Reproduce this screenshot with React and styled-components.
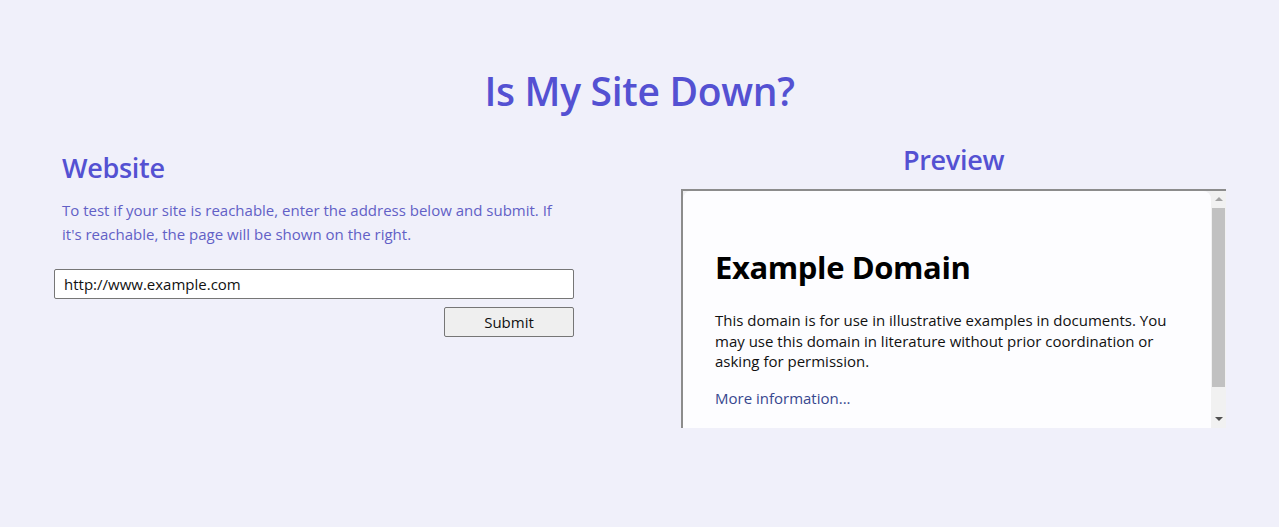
import React, { useState } from 'react';
import styled, { createGlobalStyle } from 'styled-components';

const GlobalStyle = createGlobalStyle`
  html, body {
    margin: 0;
    padding: 0;
    background-color: #f0f0fa;
  }
  body {
    font-family: "Open Sans", "Noto Sans", sans-serif;
  }
`;

const Page = styled.div`
  min-height: 527px;
  padding-top: 64px;
  box-sizing: border-box;
`;

const Title = styled.h1`
  margin: 0 0 25px;
  text-align: center;
  font-size: 39px;
  font-weight: 600;
  color: #5451d2;
  letter-spacing: -0.3px;
`;

const Columns = styled.div`
  display: grid;
  grid-template-columns: 520px 545px;
  column-gap: 107px;
  padding-left: 54px;
`;

const LeftColumn = styled.section`
  display: flex;
  flex-direction: column;
  padding-top: 8px;
`;

const RightColumn = styled.section`
  display: flex;
  flex-direction: column;
  align-items: center;
`;

const Heading = styled.h2`
  margin: 0;
  padding-left: ${(props) => (props.indent ? '8px' : '0')};
  font-size: 27px;
  font-weight: 600;
  color: #5451d2;
  letter-spacing: -0.3px;
  line-height: 36px;
`;

const Intro = styled.p`
  margin: 12px 0 23px;
  padding-left: 8px;
  font-size: 15px;
  line-height: 24px;
  color: #6260c6;
`;

const UrlInput = styled.input`
  box-sizing: border-box;
  width: 520px;
  height: 30px;
  padding: 0 9px;
  border: 1px solid #767676;
  border-radius: 2px;
  background: #fff;
  font-family: "Open Sans", sans-serif;
  font-size: 15px;
  color: #111;
  outline: none;
`;

const SubmitButton = styled.button`
  align-self: flex-end;
  margin-top: 8px;
  width: 130px;
  height: 30px;
  border: 1px solid #767676;
  border-radius: 2px;
  background: #efefef;
  font-family: "Open Sans", sans-serif;
  font-size: 15px;
  color: #111;
`;

const Frame = styled.div`
  margin-top: 11px;
  box-sizing: border-box;
  width: 545px;
  height: 239px;
  display: flex;
  border-top: 2px solid #8c8c8c;
  border-left: 2px solid #8c8c8c;
  background: #f0f0f2;
  overflow: hidden;
`;

const FrameBody = styled.div`
  flex: 1;
  overflow: hidden;
`;

const Card = styled.div`
  padding: 32px 32px 30px;
  background: #fdfdff;
  border-radius: 8px;
  font-family: "Open Sans", sans-serif;
`;

const CardTitle = styled.h3`
  margin: 25px 0 24px;
  font-size: 31px;
  font-weight: 700;
  color: #000;
  letter-spacing: -0.4px;
  line-height: 38px;
`;

const CardText = styled.p`
  margin: 0 0 16px;
  font-size: 15px;
  line-height: 20.5px;
  color: #111;
`;

const CardLink = styled.a`
  color: #38488f;
  text-decoration: none;
`;

const Scrollbar = styled.div`
  width: 15px;
  display: flex;
  flex-direction: column;
  align-items: center;
  background: #f1f1f1;
`;

const Arrow = styled.div`
  width: 0;
  height: 0;
  border-left: 4px solid transparent;
  border-right: 4px solid transparent;
  ${(props) =>
    props.down
      ? 'margin: 6px 0 7px; border-top: 4px solid #505050;'
      : 'margin: 6px 0 7px; border-bottom: 4px solid #a3a3a3;'}
`;

const Thumb = styled.div`
  width: 13px;
  height: 179px;
  background: #c1c1c1;
`;

const Track = styled.div`
  flex: 1;
`;

const App = () => {
  const [url, setUrl] = useState('http://www.example.com');

  return (
    <>
      <GlobalStyle />
      <Page>
        <Title>Is My Site Down?</Title>
        <Columns>
          <LeftColumn>
            <Heading indent>Website</Heading>
            <Intro>
              To test if your site is reachable, enter the address below and submit. If
              it's reachable, the page will be shown on the right.
            </Intro>
            <UrlInput value={url} onChange={(e) => setUrl(e.target.value)} />
            <SubmitButton>Submit</SubmitButton>
          </LeftColumn>

          <RightColumn>
            <Heading>Preview</Heading>
            <Frame>
              <FrameBody>
                <Card>
                  <CardTitle>Example Domain</CardTitle>
                  <CardText>
                    This domain is for use in illustrative examples in documents. You
                    may use this domain in literature without prior coordination or
                    asking for permission.
                  </CardText>
                  <CardText>
                    <CardLink href="#">More information...</CardLink>
                  </CardText>
                </Card>
              </FrameBody>
              <Scrollbar>
                <Arrow />
                <Thumb />
                <Track />
                <Arrow down />
              </Scrollbar>
            </Frame>
          </RightColumn>
        </Columns>
      </Page>
    </>
  );
};

export default App;
